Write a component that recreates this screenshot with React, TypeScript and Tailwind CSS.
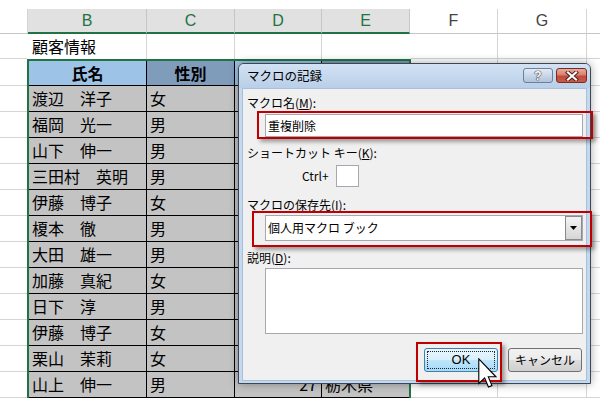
import React from "react";

const rows: [string, string][] = [
  ["渡辺　洋子", "女"],
  ["福岡　光一", "男"],
  ["山下　伸一", "男"],
  ["三田村　英明", "男"],
  ["伊藤　博子", "女"],
  ["榎本　徹", "男"],
  ["大田　雄一", "男"],
  ["加藤　真紀", "女"],
  ["日下　淳", "男"],
  ["伊藤　博子", "女"],
  ["栗山　茉莉", "女"],
  ["山上　伸一", "男"],
];

function ColHeaders() {
  const sel = "shrink-0 h-full bg-[#e1e1e1] border-b-2 border-b-[#217346] border-r border-r-[#c6c6c6] text-[#217346] flex items-center justify-center";
  const un = "shrink-0 h-full bg-white border-b border-b-[#c6c6c6] border-r border-r-[#d4d4d4] text-[#444] flex items-center justify-center";
  return (
    <div className="flex h-[25px] font-['Liberation_Sans',sans-serif] text-[16px]">
      <div className="shrink-0 w-[28px] h-full bg-white border-b border-b-[#c6c6c6] border-r border-r-[#d4d4d4]" />
      <div className={`${sel} w-[119px]`}>B</div>
      <div className={`${sel} w-[88px]`}>C</div>
      <div className={`${sel} w-[87px]`}>D</div>
      <div className={`${sel} w-[88px]`}>E</div>
      <div className={`${un} w-[88px]`}>F</div>
      <div className={`${un} w-[89px]`}>G</div>
      <div className="flex-1 h-full border-b border-b-[#c6c6c6]" />
    </div>
  );
}

function RightCells() {
  return (
    <>
      <div className="shrink-0 w-[87px] h-full border-r border-b border-[#d4d4d4] bg-white" />
      <div className="shrink-0 w-[89px] h-full border-r border-b border-[#d4d4d4] bg-white" />
      <div className="flex-1 h-full border-b border-[#d4d4d4] bg-white" />
    </>
  );
}

function Cursor() {
  return (
    <svg width="19" height="31" viewBox="0 0 12 19.5" className="block">
      <path
        d="M0.5 0.5 L0.5 16 L4.2 12.6 L6.6 18.3 L8.8 17.4 L6.5 11.8 L11.3 11.8 Z"
        fill="#fff"
        stroke="#000"
        strokeWidth="0.7"
        strokeLinejoin="miter"
      />
    </svg>
  );
}

export default function App() {
  const cellB = "shrink-0 w-[118px] h-full border-r border-b border-black pl-[3px] leading-[25px] whitespace-nowrap";
  const cellC = "shrink-0 w-[88px] h-full border-r border-b border-black pl-[3px] leading-[25px]";
  const cellD = "shrink-0 w-[87px] h-full border-r border-b border-black text-right pr-[4px] leading-[25px]";
  const cellE = "shrink-0 w-[87px] h-full border-b border-black pl-[3px] leading-[25px] whitespace-nowrap";

  return (
    <div className="relative w-[600px] h-[398px] overflow-hidden bg-white text-black font-['Noto_Sans_CJK_JP',sans-serif]">
      <div className="h-[9px]" />
      <ColHeaders />

      {/* Row 1 */}
      <div className="flex h-[25px] text-[16px]">
        <div className="shrink-0 w-[27px] h-full border-b border-[#d4d4d4]" />
        <div className="shrink-0 w-[384px] h-full flex px-[2px]">
          <div className="shrink-0 w-[118px] h-full border-r border-[#d4d4d4] pl-[3px] leading-[25px]">顧客情報</div>
          <div className="shrink-0 w-[88px] h-full border-r border-[#d4d4d4]" />
          <div className="shrink-0 w-[87px] h-full border-r border-[#d4d4d4]" />
          <div className="shrink-0 w-[87px] h-full" />
        </div>
        <RightCells />
      </div>

      {/* Table header row */}
      <div className="flex h-[27px] text-[16px]">
        <div className="shrink-0 w-[27px] h-full border-b border-[#d4d4d4]" />
        <div className="shrink-0 w-[384px] h-full flex border-t-2 border-x-2 border-[#217346]">
          <div className="shrink-0 w-[118px] h-full border-r border-b border-black bg-[#9dc3e6] font-bold text-center leading-[24px]">氏名</div>
          <div className="shrink-0 w-[88px] h-full border-r border-b border-black bg-[#7f9cbb] font-bold text-center leading-[24px]">性別</div>
          <div className="shrink-0 w-[87px] h-full border-r border-b border-black bg-[#9dc3e6]" />
          <div className="shrink-0 w-[87px] h-full border-b border-black bg-[#7f9cbb]" />
        </div>
        <RightCells />
      </div>

      {rows.map(([name, sex], i) => (
        <div key={i} className="flex h-[26px] text-[16px]">
          <div className="shrink-0 w-[27px] h-full border-b border-[#d4d4d4]" />
          <div className="shrink-0 w-[384px] h-full flex border-x-2 border-[#217346] bg-[#c3c3c3]">
            <div className={cellB}>{name}</div>
            <div className={cellC}>{sex}</div>
            <div className={cellD}>{i === rows.length - 1 ? "27" : ""}</div>
            <div className={cellE}>{i === rows.length - 1 ? "栃木県" : ""}</div>
          </div>
          <RightCells />
        </div>
      ))}

      {/* Dialog */}
      <div className="absolute left-[238px] top-[63px] w-[353px] h-[321px] rounded-t-[6px] border border-[#3d4754] bg-[#c4d8ee] shadow-[0_0_10px_rgba(0,0,0,0.35)] flex flex-col px-[3px] pb-[2px]">
        <div className="shrink-0 h-[24px] flex items-start -mx-[3px] px-[3px] rounded-t-[5px] bg-linear-to-b from-[#d2e2f4] to-[#b9cfe8]">
          <div className="flex-1 pl-[5px] text-[12.5px] leading-[24px] text-black">マクロの記録</div>
          <div className="mt-[4px] w-[30px] h-[15px] rounded-[3px] border border-[#6e7f99] bg-linear-to-b from-[#e3ebf5] to-[#afc3db] flex items-center justify-center text-white font-bold text-[12px] leading-none font-['Liberation_Sans',sans-serif] [text-shadow:0_0_1px_#333,0_0_1px_#333,0_0_1px_#333]">?</div>
          <div className="mt-[4px] ml-[3px] w-[31px] h-[15px] rounded-[3px] border border-[#7a2b22] bg-[linear-gradient(#e8a99c_0%,#d7826f_45%,#c24a3b_55%,#c85a45_100%)] flex items-center justify-center">
            <svg width="14" height="10" viewBox="0 0 14 10">
              <path d="M3 1.5 L11 8.5 M11 1.5 L3 8.5" stroke="#4a1a14" strokeWidth="4" strokeLinecap="square" />
              <path d="M3 1.5 L11 8.5 M11 1.5 L3 8.5" stroke="#fff" strokeWidth="2.2" strokeLinecap="square" />
            </svg>
          </div>
        </div>

        <div className="flex-1 bg-[#f0f0f0] border border-[#a7c0dc] flex flex-col text-[12px] leading-[14px] text-black">
          <div className="mt-[7px] ml-[4px] h-[14px]">
            マクロ名(<span className="underline">M</span>):
          </div>
          <div className="mt-[4px] ml-[22px] w-[318px] h-[23px] bg-white border border-[#a5a8ae] pl-[2px] leading-[21px]">
            重複削除
          </div>

          <div className="mt-[9px] ml-[4px] h-[14px]">
            ショートカット キー(<span className="underline">K</span>):
          </div>
          <div className="mt-[5px] h-[22px] flex items-center">
            <span className="ml-[59px] w-[34px]">Ctrl+</span>
            <div className="w-[23px] h-[22px] bg-white border border-[#a5a8ae]" />
          </div>

          <div className="mt-[11px] ml-[4px] h-[14px]">
            マクロの保存先(<span className="underline">I</span>):
          </div>
          <div className="mt-[3px] ml-[22px] w-[318px] h-[26px] bg-white border border-[#a5a8ae] flex items-center">
            <span className="flex-1 pl-[2px]">個人用マクロ ブック</span>
            <div className="w-[17px] h-[24px] border border-[#8a8a8a] bg-linear-to-b from-[#f4f4f4] to-[#d6d6d6] flex items-center justify-center">
              <svg width="7" height="4" viewBox="0 0 7 4">
                <path d="M0 0 L7 0 L3.5 4 Z" fill="#000" />
              </svg>
            </div>
          </div>

          <div className="mt-[10px] ml-[4px] h-[14px]">
            説明(<span className="underline">D</span>):
          </div>
          <div className="mt-[3px] ml-[22px] w-[318px] h-[66px] bg-white border border-[#a5a8ae]" />

          <div className="mt-[14px] flex h-[24px]">
            <div className="ml-[181px] w-[74px] h-[24px] rounded-[3px] border border-[#3c7fb1] bg-[linear-gradient(#eaf6fd_0%,#d9f0fc_50%,#bee6fd_50%,#a7d9f5_100%)] p-[2px]">
              <div className="w-full h-full border border-dotted border-[#222] flex items-center justify-center text-[13px] font-['Liberation_Sans',sans-serif]">OK</div>
            </div>
            <div className="ml-[10px] w-[74px] h-[24px] rounded-[3px] border border-[#707070] bg-[linear-gradient(#f2f2f2_0%,#ebebeb_50%,#dddddd_50%,#cfcfcf_100%)] flex items-center justify-center text-[12px]">
              キャンセル
            </div>
          </div>
        </div>
      </div>

      {/* Red annotation boxes */}
      <div className="absolute left-[257px] top-[111px] w-[336px] h-[28px] border-2 border-[#c00000] shadow-[3px_3px_4px_rgba(0,0,0,0.35)]" />
      <div className="absolute left-[252px] top-[211px] w-[340px] h-[36px] border-2 border-[#c00000] shadow-[3px_3px_4px_rgba(0,0,0,0.35)]" />
      <div className="absolute left-[416px] top-[342px] w-[86px] h-[40px] border-2 border-[#c00000] shadow-[3px_3px_4px_rgba(0,0,0,0.35)]" />

      {/* Mouse cursor */}
      <div className="absolute left-[478px] top-[358px]">
        <Cursor />
      </div>
    </div>
  );
}
